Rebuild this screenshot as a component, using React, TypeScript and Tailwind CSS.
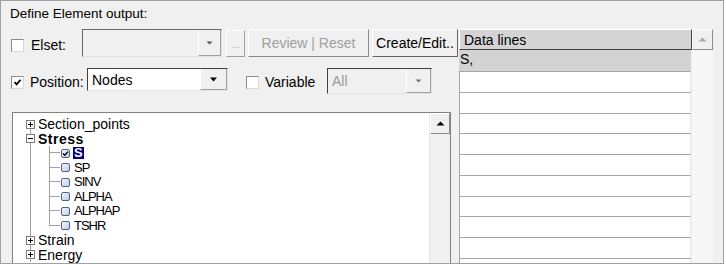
import React from "react";

function CheckBox({ checked }: { checked?: boolean }) {
  return (
    <div className="w-[13px] h-[13px] shrink-0 bg-white border border-t-[#8a8a8a] border-l-[#8a8a8a] border-r-[#d8d8d8] border-b-[#d8d8d8] flex items-center justify-center">
      {checked && (
        <svg width="11" height="11" viewBox="0 0 11 11">
          <path d="M2.5 5.2 L4.6 7.4 L8.6 2.8" fill="none" stroke="#000" strokeWidth="1.7" />
        </svg>
      )}
    </div>
  );
}

function Arrow({ color }: { color: string }) {
  return (
    <svg width="9" height="5" viewBox="0 0 9 5">
      <path d="M1 0.5 H8 L4.5 4.5 Z" fill={color} />
    </svg>
  );
}

function TreeBox({ checked }: { checked?: boolean }) {
  return (
    <svg width="9" height="9" viewBox="0 0 9 9" className="shrink-0">
      <defs>
        <linearGradient id="cb" x1="0" y1="0" x2="1" y2="1">
          <stop offset="0" stopColor="#f4f8ff" />
          <stop offset="1" stopColor="#b9cbe6" />
        </linearGradient>
      </defs>
      <rect x="0.5" y="0.5" width="8" height="8" rx="1.5" fill="url(#cb)" stroke="#4f6385" />
      {checked && <path d="M2 4.4 L3.8 6.2 L7 2.6" fill="none" stroke="#000" strokeWidth="1.4" />}
    </svg>
  );
}

function Expander({ open }: { open?: boolean }) {
  return (
    <svg width="9" height="9" viewBox="0 0 9 9" className="shrink-0">
      <rect x="0.5" y="0.5" width="8" height="8" fill="#fff" stroke="#7a7a7a" />
      <path d="M2 4.5 H7" stroke="#000" />
      {!open && <path d="M4.5 2 V7" stroke="#000" />}
    </svg>
  );
}

function RootRow({ label, open, first, bold }: { label: string; open?: boolean; first?: boolean; bold?: boolean }) {
  return (
    <div className="flex h-[14.5px]">
      <div className="w-[9px] flex flex-col items-center">
        <div className={first ? "h-[2.75px] w-px" : "h-[2.75px] w-px bg-[#a0a0a0]"} />
        <Expander open={open} />
        <div className="flex-1 w-px bg-[#a0a0a0]" />
      </div>
      <div
        className={
          bold
            ? "ml-[3px] text-[14px] leading-[14.5px] font-bold tracking-[0.5px]"
            : "ml-[3px] text-[14px] leading-[14.5px]"
        }
      >
        {label}
      </div>
    </div>
  );
}

function ChildRow({ label, last, checked, selected }: { label: string; last?: boolean; checked?: boolean; selected?: boolean }) {
  return (
    <div className="flex h-[14.5px]">
      <div className="w-[9px] flex justify-center">
        <div className="w-px h-full bg-[#a0a0a0]" />
      </div>
      <div className="w-[14px]" />
      <div className="w-[11px] flex flex-col">
        <div className="h-1/2 border-l border-b border-[#a0a0a0]" />
        <div className={last ? "flex-1" : "flex-1 border-l border-[#a0a0a0]"} />
      </div>
      <div className="ml-[1px] flex items-center">
        <TreeBox checked={checked} />
      </div>
      <div className="ml-[3px] flex items-center">
        <span
          className={
            selected
              ? "px-[1px] bg-[#000080] text-white font-bold text-[13px] leading-[12px] h-[12px]"
              : "px-[1px] text-[13px] leading-[14.5px] tracking-[-1px]"
          }
        >
          {label}
        </span>
      </div>
    </div>
  );
}

export default function App() {
  const rows = Array.from({ length: 10 });
  return (
    <div className="w-[726px] h-[265px] bg-white">
      <div className="w-[724px] h-[264px] bg-[#f0f0f0] border border-[#a0a0a0] flex text-black font-['Liberation_Sans',Arial,sans-serif] overflow-hidden">
        {/* left side */}
        <div className="w-[458px] flex flex-col">
          <div className="h-[28px] pl-[9px] pt-[5px] text-[13.5px] leading-[15px]">Define Element output:</div>

          <div className="h-[28px] flex items-start text-[14px]">
            <div className="ml-[10px] mt-[10px]">
              <CheckBox />
            </div>
            <div className="ml-[7px] w-[51px] mt-[8px] leading-[16px]">Elset:</div>
            <div className="w-[140px] h-[28px] flex border border-t-[#696969] border-l-[#696969] border-r-[#e3e3e3] border-b-[#e3e3e3] bg-[#f0f0f0]">
              <div className="flex-1" />
              <div className="w-[23px] border-l border-l-white border-r border-b border-r-[#a0a0a0] border-b-[#a0a0a0] flex items-center justify-center">
                <svg width="7" height="4" viewBox="0 0 7 4">
                  <path d="M0.5 0.5 H6.5 L3.5 3.5 Z" fill="#555" />
                </svg>
              </div>
            </div>
            <div className="ml-[4px] w-[19px] h-[27px] mt-[1px] border border-t-white border-l-white border-r-[#a0a0a0] border-b-[#a0a0a0] flex items-end justify-center pb-[6px] text-[9px] leading-[9px] text-[#a0a0a0]">
              ...
            </div>
            <div className="ml-[3px] w-[121px] h-[28px] border border-t-white border-l-white border-r-[#8a8a8a] border-b-[#8a8a8a] flex items-center justify-center leading-[16px] text-[#a0a0a0]">
              Review | Reset
            </div>
            <div className="ml-[3px] w-[86px] h-[28px] border border-t-white border-l-white border-r-[#646464] border-b-[#646464] flex items-center justify-center leading-[16px]">
              Create/Edit..
            </div>
          </div>

          <div className="h-[55px] flex items-start text-[14px]">
            <div className="ml-[10px] mt-[19px]">
              <CheckBox checked />
            </div>
            <div className="ml-[6px] w-[57px] mt-[17px] leading-[16px]">Position:</div>
            <div className="w-[141px] h-[23px] mt-[11px] flex border border-t-[#404040] border-l-[#404040] border-r-[#e3e3e3] border-b-[#e3e3e3] bg-white">
              <div className="flex-1 pl-[4px] flex items-center leading-[16px]">Nodes</div>
              <div className="w-[27px] bg-[#f0f0f0] border-l border-l-white border-r border-b border-r-[#a0a0a0] border-b-[#a0a0a0] flex items-center justify-center">
                <Arrow color="#000" />
              </div>
            </div>
            <div className="ml-[18px] mt-[19px]">
              <CheckBox />
            </div>
            <div className="ml-[6px] w-[62px] mt-[17px] leading-[16px]">Variable</div>
            <div className="w-[105px] h-[26px] mt-[11px] flex border border-t-[#404040] border-l-[#404040] border-r-[#e3e3e3] border-b-[#e3e3e3] bg-[#f0f0f0]">
              <div className="flex-1 pl-[4px] flex items-center leading-[16px] text-[#9a9a9a]">All</div>
              <div className="w-[25px] border-l border-l-white border-r border-b border-r-[#a0a0a0] border-b-[#a0a0a0] flex items-center justify-center">
                <svg width="7" height="4" viewBox="0 0 7 4">
                  <path d="M0.5 0.5 H6.5 L3.5 3.5 Z" fill="#777" />
                </svg>
              </div>
            </div>
          </div>

          {/* tree */}
          <div className="ml-[11px] w-[439px] flex-1 flex border-t border-l border-r border-[#828282] min-h-0">
            <div className="flex-1 bg-white pl-[13px] pt-[4px] overflow-hidden">
              <RootRow label="Section_points" first />
              <RootRow label="Stress" open bold />
              <ChildRow label="S" checked selected />
              <ChildRow label="SP" />
              <ChildRow label="SINV" />
              <ChildRow label="ALPHA" />
              <ChildRow label="ALPHAP" />
              <ChildRow label="TSHR" last />
              <RootRow label="Strain" />
              <RootRow label="Energy" />
            </div>
            <div className="w-[21px] flex flex-col bg-[#f0f0f0] border-l border-l-[#e6e6e6]">
              <div className="h-[21px] border border-t-white border-l-white border-r-[#8a8a8a] border-b-[#8a8a8a] flex items-center justify-center">
                <svg width="9" height="5" viewBox="0 0 9 5">
                  <path d="M0.5 4.5 H8.5 L4.5 0.5 Z" fill="#000" />
                </svg>
              </div>
              <div className="flex-1" />
            </div>
          </div>
        </div>

        {/* right side */}
        <div className="flex-1 flex flex-col">
          <div className="h-[28px]" />
          <div className="flex-1 flex min-h-0">
            <div className="w-[233px] flex flex-col overflow-hidden">
              <div className="h-[21px] shrink-0 bg-[#d4d4d4] border border-t-white border-l-white border-r-[#404040] border-b-[#404040] pl-[4px] flex items-center text-[14px] leading-[16px]">
                Data lines
              </div>
              <div className="h-[21px] shrink-0 bg-[#d3d3d3] pl-[1px] pt-[1px] mr-[1px] text-[14px] leading-[16px]">S,</div>
              {rows.map((_, i) => (
                <div
                  key={i}
                  className="h-[20.75px] shrink-0 bg-white border-t border-l border-r border-t-[#a6a6a6] border-l-[#a6a6a6] border-r-[#e6e6e6] mr-[1px]"
                />
              ))}
            </div>
            <div className="w-[21px] flex flex-col">
              <div className="h-[21px] border border-t-white border-l-white border-r-[#8a8a8a] border-b-[#8a8a8a] bg-[#f0f0f0] flex items-center justify-center">
                <svg width="9" height="5" viewBox="0 0 9 5">
                  <path d="M0.5 4.5 H8.5 L4.5 0.5 Z" fill="#a8a8a8" />
                </svg>
              </div>
              <div className="flex-1 bg-[#f6f6f6]" />
            </div>
            <div className="flex-1" />
          </div>
        </div>
      </div>
    </div>
  );
}
